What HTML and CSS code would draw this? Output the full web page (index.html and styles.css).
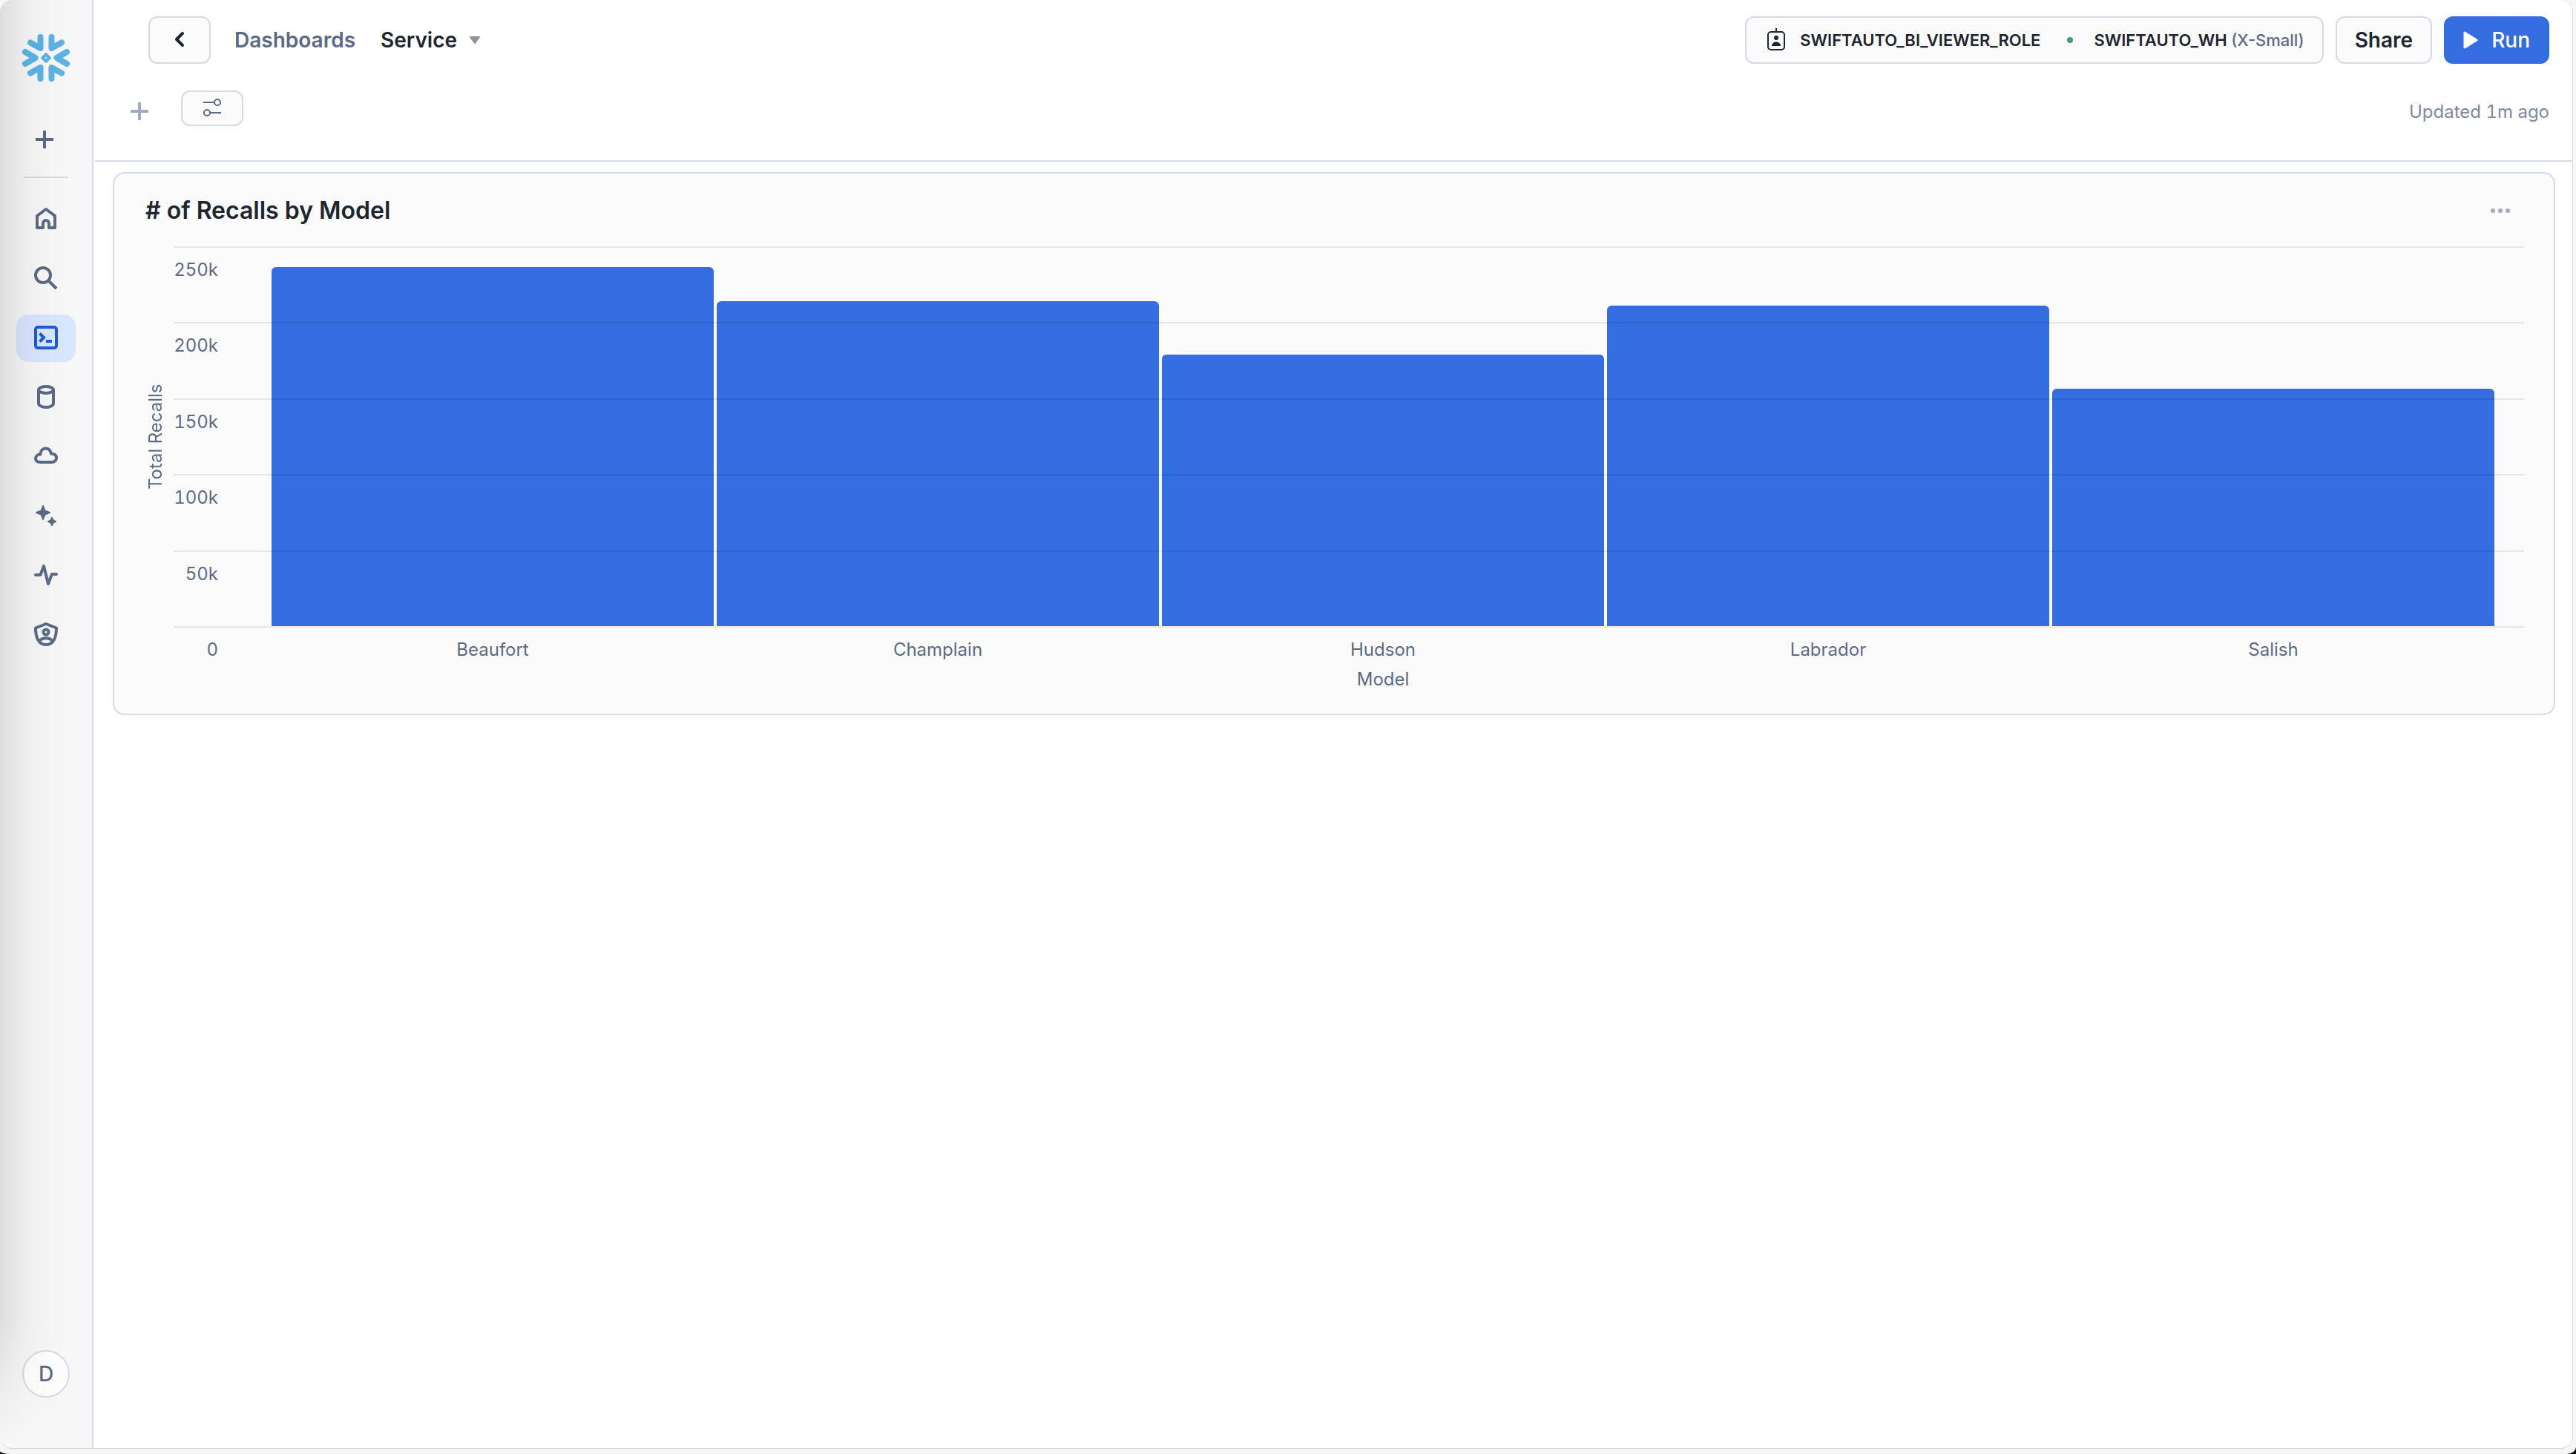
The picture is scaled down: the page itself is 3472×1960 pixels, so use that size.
FILE: index.html
```html
<!DOCTYPE html>
<html lang="en">
<head>
<meta charset="utf-8">
<meta name="viewport" content="width=device-width, initial-scale=1">
<title>Service - Dashboards</title>
<link rel="stylesheet" href="styles.css">
</head>
<body>
<div class="frame">
<div class="window">
  <aside class="sidebar">
    <a class="logo" href="#" aria-label="Snowflake">
      <svg width="64" height="64" viewBox="0 0 64 64" fill="none" stroke="#5bb4e5" stroke-width="8" stroke-linecap="round" stroke-linejoin="round">
        <path d="M24.500 4V19L11 11.500M39.500 4V19L53 11.500M24.500 60V45L11 52.500M39.500 60V45L53 52.500M4 24L17.500 32L4 40M60 24L46.500 32L60 40"/>
        <path d="M32 27.500L36.500 32L32 36.500L27.500 32Z" stroke-width="4.500"/>
      </svg>
    </a>
    <button class="side-add" type="button" aria-label="Create">
      <svg width="24" height="24" viewBox="0 0 24 24" fill="none" stroke="currentColor" stroke-width="4"><path d="M12 0V24M0 12H24"/></svg>
    </button>
    <hr class="side-rule">
    <nav class="side-nav" aria-label="Main">
      <a class="side-item" href="#" aria-label="Home">
        <svg width="32" height="32" viewBox="0 0 32 32" fill="none" stroke="currentColor" stroke-width="4" stroke-linejoin="round"><path d="M4 11L16 2L28 11V27H20V21A4 4 0 0 0 12 21V27H4Z"/></svg>
      </a>
      <a class="side-item" href="#" aria-label="Search">
        <svg width="32" height="32" viewBox="0 0 32 32" fill="none" stroke="currentColor" stroke-width="4"><circle cx="12" cy="11" r="10"/><path d="M19 18L30 29"/></svg>
      </a>
      <a class="side-item active" href="#" aria-label="Projects" aria-current="page">
        <svg width="32" height="32" viewBox="0 0 32 32" fill="none" stroke="currentColor" stroke-width="4"><rect x="2" y="1" width="28" height="28" rx="3"/><path d="M7.500 9.500L13 15L7.500 20.500M16 20H24"/></svg>
      </a>
      <a class="side-item" href="#" aria-label="Data">
        <svg width="32" height="32" viewBox="0 0 32 32" fill="none" stroke="currentColor" stroke-width="4"><ellipse cx="16" cy="5.500" rx="10" ry="4.500"/><path d="M6 5.500V23.500C6 26.500 10 29 16 29S26 26.500 26 23.500V5.500"/></svg>
      </a>
      <a class="side-item" href="#" aria-label="Data products">
        <svg width="32" height="32" viewBox="0 0 32 32" fill="none" stroke="currentColor" stroke-width="4" stroke-linejoin="round"><path d="M8 23H24.500A5.500 5.500 0 0 0 30 17C30 13.500 27 11.500 23 11.500C22 7 19 4.500 15.500 4.500C11.500 4.500 8.500 7.500 8.500 12.500C4.500 12.500 2 15 2 18C2 21 4.500 23 8 23Z"/></svg>
      </a>
      <a class="side-item" href="#" aria-label="AI and ML">
        <svg width="32" height="32" viewBox="0 0 32 32" fill="currentColor" stroke="currentColor" stroke-width="2" stroke-linejoin="round"><path d="M12 2L14.500 8.500L21 11L14.500 13.500L12 20L9.500 13.500L3 11L9.500 8.500ZM24 18L25.500 21.500L29 23L25.500 24.500L24 28L22.500 24.500L19 23L22.500 21.500Z"/></svg>
      </a>
      <a class="side-item" href="#" aria-label="Monitoring">
        <svg width="32" height="32" viewBox="0 0 32 32" fill="none" stroke="currentColor" stroke-width="4" stroke-linecap="round" stroke-linejoin="round"><path d="M2 15H8.500L13 3L19 27L24 14H30"/></svg>
      </a>
      <a class="side-item" href="#" aria-label="Admin">
        <svg width="32" height="32" viewBox="0 0 32 32" fill="none" stroke="currentColor" stroke-width="4" stroke-linejoin="round"><path d="M16 1L30 6.500C30 19 26 29 16 29S2 19 2 6.500Z"/><circle cx="16" cy="12" r="3.500"/><path d="M7 24C12 19 20 19 25 24"/></svg>
      </a>
    </nav>
    <button class="avatar" type="button" aria-label="Account">D</button>
  </aside>

  <main class="main">
    <header class="header">
      <div class="topbar">
        <button class="btn back" type="button" aria-label="Back">
          <svg width="24" height="24" viewBox="0 0 24 24" fill="none" stroke="currentColor" stroke-width="4" stroke-linecap="round" stroke-linejoin="round"><path d="M16 3L8 11L16 19"/></svg>
        </button>
        <nav class="crumbs" aria-label="Breadcrumb">
          <a class="crumb" href="#">Dashboards</a>
          <button class="crumb-current" type="button">Service
            <svg width="16" height="12" viewBox="0 0 16 12"><path d="M2 2H14L8 10Z" fill="#8e949f" stroke="#8e949f" stroke-width="2" stroke-linejoin="round"/></svg>
          </button>
        </nav>
        <div class="actions">
          <button class="btn context" type="button">
            <svg width="24" height="32" viewBox="0 0 24 32" fill="none" stroke="currentColor" stroke-width="2"><rect x="1" y="5" width="22" height="24" rx="4"/><path d="M12 0V5"/><circle cx="12" cy="13" r="3" fill="currentColor" stroke="none"/><path d="M6 24C6 16.500 18 16.500 18 24Z" fill="currentColor" stroke="none"/></svg>
            <span class="role">SWIFTAUTO_BI_VIEWER_ROLE</span>
            <span class="status"></span>
            <span>SWIFTAUTO_WH <span class="size">(X-Small)</span></span>
          </button>
          <button class="btn share" type="button">Share</button>
          <button class="btn run" type="button">
            <svg width="20" height="24" viewBox="0 0 20 24"><path d="M2 2L18 12L2 22Z" fill="currentColor" stroke="currentColor" stroke-width="3" stroke-linejoin="round"/></svg>
            Run
          </button>
        </div>
      </div>
      <div class="toolbar">
        <button class="tile-add" type="button" aria-label="Add tile">
          <svg width="24" height="24" viewBox="0 0 24 24" fill="none" stroke="currentColor" stroke-width="4"><path d="M12 0V24M0 12H24"/></svg>
        </button>
        <button class="btn filters" type="button" aria-label="Filters">
          <svg width="24" height="24" viewBox="0 0 24 24" fill="none" stroke="currentColor" stroke-width="2"><path d="M0 4H15M9 18H24"/><circle cx="19" cy="4" r="4"/><circle cx="5" cy="18" r="4"/></svg>
        </button>
        <span class="updated">Updated 1m ago</span>
      </div>
    </header>

    <section class="card">
      <div class="card-head">
        <h2 class="card-title"># of Recalls by Model</h2>
        <button class="more" type="button" aria-label="More options">
          <svg width="28" height="8" viewBox="0 0 28 8" fill="currentColor"><circle cx="4" cy="4" r="3"/><circle cx="14" cy="4" r="3"/><circle cx="24" cy="4" r="3"/></svg>
        </button>
      </div>
      <div class="chart">
        <div class="y-title">Total Recalls</div>
        <div class="plot">
          <div class="bars">
            <div class="bar" style="height:94.500%"></div>
            <div class="bar" style="height:85.500%"></div>
            <div class="bar" style="height:71.500%"></div>
            <div class="bar" style="height:84.400%"></div>
            <div class="bar" style="height:62.500%"></div>
          </div>
          <div class="grid">
            <div class="tick"><span>250k</span></div>
            <div class="tick"><span>200k</span></div>
            <div class="tick"><span>150k</span></div>
            <div class="tick"><span>100k</span></div>
            <div class="tick"><span>50k</span></div>
            <div class="tick"><span>0</span></div>
          </div>
          <div class="x-labels">
            <span>Beaufort</span><span>Champlain</span><span>Hudson</span><span>Labrador</span><span>Salish</span>
          </div>
          <div class="x-title">Model</div>
        </div>
      </div>
    </section>
  </main>
</div>
</div>
</body>
</html>
```
FILE: styles.css
```css
* { box-sizing: border-box; }

html { background: #0b0d0a; }

body {
  margin: 0;
  font-family: Inter, "Liberation Sans", sans-serif;
  font-size: 24px;
  color: #1e252f;
}

button {
  margin: 0;
  padding: 0;
  border: 0;
  background: none;
  font: inherit;
  color: inherit;
  cursor: pointer;
}

a { color: inherit; text-decoration: none; }
svg { display: block; flex: none; overflow: visible; }

.frame {
  display: flex;
  min-height: 100vh;
  padding: 0 4px 7px 0;
  background: #f6f6f6;
  border-radius: 0 0 12px 14px / 0 0 10px 4px;
}

.window {
  display: flex;
  flex: 1;
  min-width: 0;
  border-right: 1px solid #dedede;
  border-bottom: 1px solid #d4d4d4;
  border-radius: 16px;
  overflow: hidden;
  background: #fff;
}

/* Sidebar */
.sidebar {
  position: relative;
  display: flex;
  flex-direction: column;
  align-items: center;
  width: 126px;
  flex: none;
  padding: 46px 0 68px;
  border-right: 2px solid #d5dae4;
  background: #f7f7f7;
  color: #5d6a85;
}

.sidebar::after {
  content: "";
  position: absolute;
  inset: 0;
  background: linear-gradient(90deg, rgba(0, 0, 0, .1), rgba(0, 0, 0, .035) 36px, rgba(0, 0, 0, .01) 64px, transparent 90px);
  mask-image: linear-gradient(#000 calc(100% - 180px), transparent);
  pointer-events: none;
}

.side-add { margin: 66px 4px 0 0; }

.side-rule {
  width: 60px;
  height: 2px;
  margin: 38px 0 24px;
  border: 0;
  background: #d5dae4;
}

.side-nav {
  display: flex;
  flex-direction: column;
  gap: 16px;
}

.side-item {
  display: flex;
  align-items: center;
  justify-content: center;
  width: 80px;
  height: 64px;
  border-radius: 16px;
}

.side-item.active { background: #d9e6ff; color: #1f5bd3; }

.avatar {
  width: 64px;
  height: 64px;
  margin-top: auto;
  border: 2px solid #d5dae4;
  border-radius: 50%;
  background: #fdfdfd;
  font-size: 28px;
  font-weight: 500;
}

/* Header */
.main { flex: 1; min-width: 0; padding-left: 2px; }

.header {
  height: 218px;
  padding: 22px 31px 0 48px;
  border-bottom: 2px solid #d5dae4;
}

.topbar { display: flex; align-items: center; padding-left: 24px; }

.btn {
  display: flex;
  align-items: center;
  justify-content: center;
  height: 64px;
  border: 2px solid #d5dae4;
  border-radius: 12px;
  background: #fbfbfb;
}

.back { width: 84px; }

.crumbs {
  display: flex;
  align-items: center;
  gap: 34px;
  margin-left: 32px;
  font-size: 28px;
  line-height: 36px;
  font-weight: 600;
}

.crumb { color: #5d6a85; }
.crumb-current { display: flex; align-items: center; gap: 16px; }

.actions { display: flex; gap: 16px; margin-left: auto; font-size: 28px; }

.context {
  padding: 0 24px 0 28px;
  font-size: 22px;
  font-weight: 600;
}

.role { margin-left: 20px; }

.status {
  width: 8px;
  height: 8px;
  margin: 0 28px 0 36px;
  border-radius: 50%;
  background: #4a9a78;
}

.size { color: #5d6a85; font-weight: 500; }
.share { padding: 0 24px; font-weight: 600; }

.run {
  gap: 18px;
  padding: 0 24px;
  border-color: #346de0;
  background: #346de0;
  color: #fff;
  font-weight: 500;
}

.toolbar { display: flex; align-items: center; margin-top: 36px; }
.tile-add { margin-top: 8px; color: #a2abc1; }

.filters {
  width: 84px;
  height: 48px;
  margin-left: 44px;
  color: #5d6a85;
}

.updated {
  margin: 8px 0 0 auto;
  color: #7d89a0;
  font-variant-numeric: tabular-nums;
}

/* Chart card */
.card {
  margin: 14px 23px 0 24px;
  padding: 32px 40px 30px 40px;
  border: 2px solid #d5dae4;
  border-radius: 16px;
  background: #fbfbfb;
}

.card-head {
  display: flex;
  align-items: center;
  justify-content: space-between;
  height: 36px;
  padding: 0 18px 0 2px;
}

.card-title { margin: 0; font-size: 32px; line-height: 36px; font-weight: 600; }
.more { color: #a2abc1; }

.chart {
  display: flex;
  margin-top: 30px;
  color: #5d6a85;
  line-height: 32px;
  font-variant-numeric: tabular-nums;
}

.y-title {
  width: 32px;
  height: 514px;
  margin-right: 8px;
  text-align: center;
  writing-mode: vertical-rl;
  transform: rotate(180deg);
}

.plot { position: relative; flex: 1; min-width: 0; }

.bars {
  display: flex;
  align-items: flex-end;
  gap: 4px;
  height: 512px;
  padding: 0 40px 0 132px;
}

.bar { flex: 1; border-radius: 6px 6px 0 0; background: #346de0; }

/* Gridlines run across the bars, with each label below its line */
.grid {
  position: absolute;
  top: 0;
  left: 0;
  right: 0;
  height: 514px;
  display: flex;
  flex-direction: column;
  justify-content: space-between;
}

.tick { height: 2px; background: rgba(0, 0, 0, .08); }

.tick span {
  display: block;
  width: 60px;
  padding-top: 16px;
  text-align: right;
}

.x-labels {
  display: flex;
  gap: 4px;
  padding: 16px 40px 0 132px;
}

.x-labels span { flex: 1; text-align: center; }
.x-title { margin-top: 8px; padding: 0 40px 0 132px; text-align: center; }
```
